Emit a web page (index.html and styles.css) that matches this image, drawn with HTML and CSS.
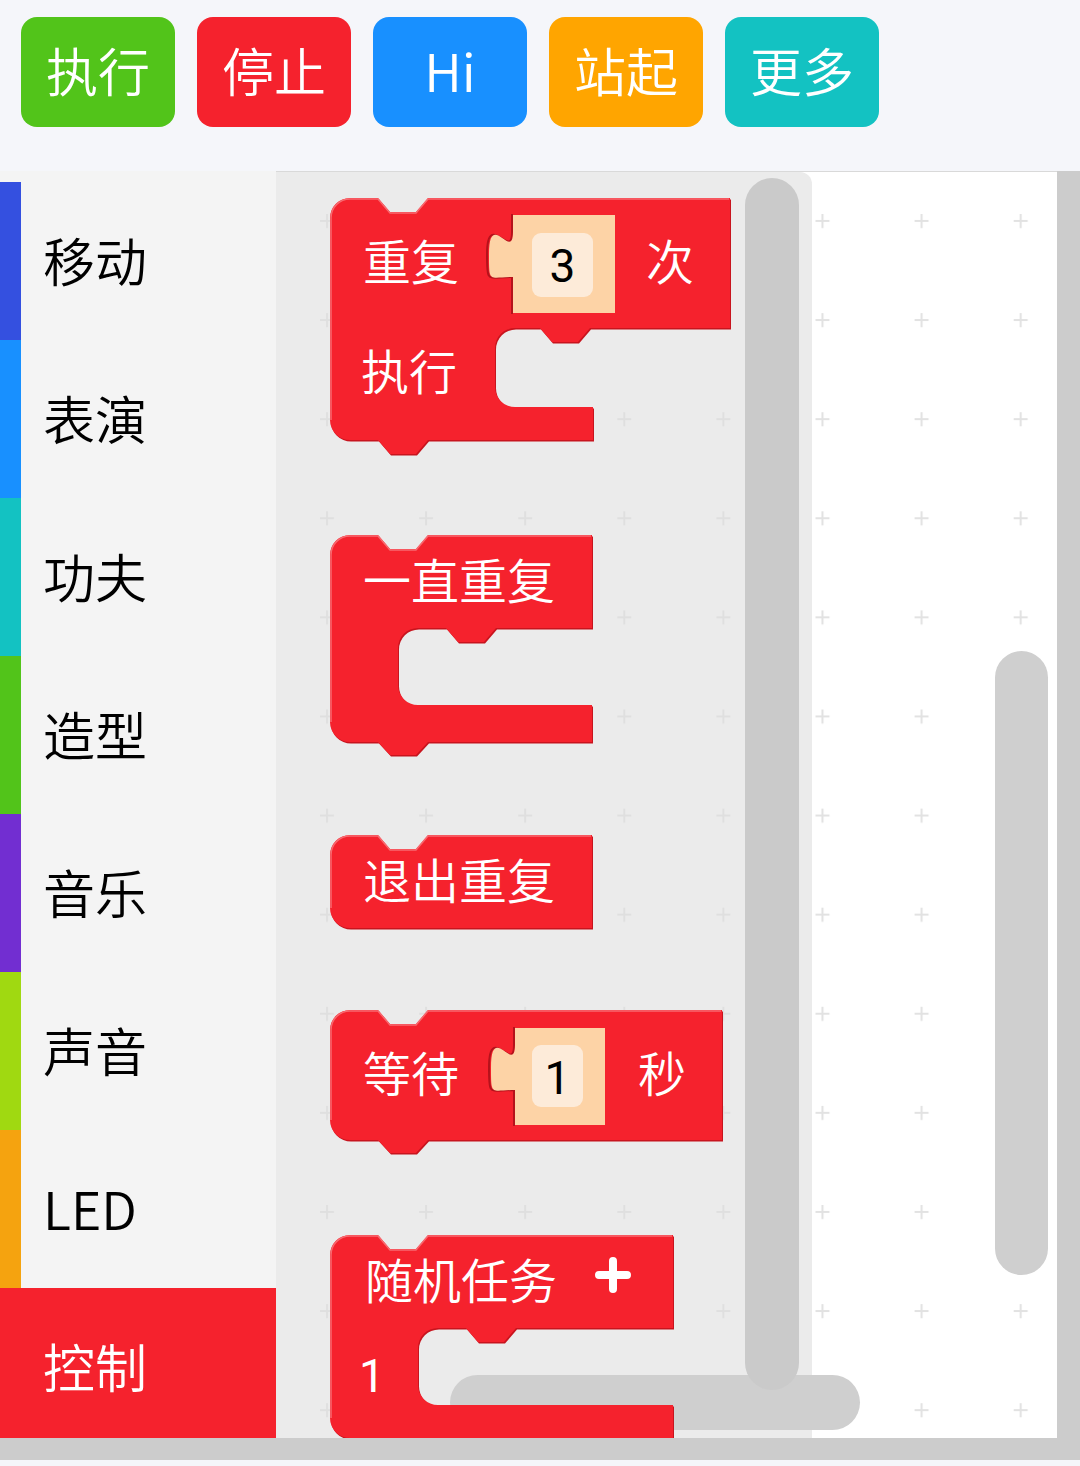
FILE: index.html
```html
<!DOCTYPE html>
<html lang="zh-CN">
<head>
<meta charset="utf-8">
<title>编程</title>
<link rel="stylesheet" href="styles.css">
</head>
<body>
<div class="app">
  <header class="toolbar">
    <button class="tbtn green">执行</button>
    <button class="tbtn red">停止</button>
    <button class="tbtn blue">Hi</button>
    <button class="tbtn orange">站起</button>
    <button class="tbtn teal">更多</button>
  </header>
  <div class="main">
    <nav class="sidebar">
      <div class="cat c-move">移动</div>
      <div class="cat c-show">表演</div>
      <div class="cat c-kungfu">功夫</div>
      <div class="cat c-shape">造型</div>
      <div class="cat c-music">音乐</div>
      <div class="cat c-sound">声音</div>
      <div class="cat c-led">LED</div>
      <div class="cat c-ctrl selected">控制</div>
    </nav>
    <div class="workspace">
      <svg class="canvas" width="781" height="1266" viewBox="276 172 781 1266" xmlns="http://www.w3.org/2000/svg">
        <defs>
          <pattern id="grid" x="320" y="214" width="99.1" height="99.1" patternUnits="userSpaceOnUse">
            <path class="grid-cross" d="M0,7 H14 M7,0 V14"/>
          </pattern>
        </defs>
        <rect class="ws-bg" x="276" y="172" width="781" height="1266"/>
        <rect x="276" y="172" width="781" height="1266" fill="url(#grid)"/>
        <path class="flyout-bg" d="M276,172 L800,172 A12,12 0 0 1 812,184 L812,1438 L276,1438 Z"/>

        <rect class="scroll" x="995" y="651" width="53" height="624" rx="26.5"/>
        <rect class="scroll" x="450" y="1375" width="410" height="55" rx="27.5"/>

        <!-- 重复 3 次 / 执行 -->
        <g class="block">
          <path class="blk-shadow" d="M330,218 A20,20 0 0 1 350,198 L378,198 L390,212 L416,212 L428,198 L730,198 L730,328 L590,328 L578,342 L552,342 L540,328 L515,328 A20,20 0 0 0 495,348 L495,387 A20,20 0 0 0 515,407 L593,407 L593,440 L428,440 L416,454 L390,454 L378,440 L350,440 A20,20 0 0 1 330,420 Z"/>
          <path class="blk" d="M330,218 A20,20 0 0 1 350,198 L378,198 L390,212 L416,212 L428,198 L730,198 L730,328 L590,328 L578,342 L552,342 L540,328 L515,328 A20,20 0 0 0 495,348 L495,387 A20,20 0 0 0 515,407 L593,407 L593,440 L428,440 L416,454 L390,454 L378,440 L350,440 A20,20 0 0 1 330,420 Z"/>
          <path class="blk-light" d="M331,420 L331,218 A19,19 0 0 1 350,199 L378,199 L390,213 L416,213 L428,199 L729,199"/>
          <path class="slot-edge" d="M512,214 L512,232 C512,262 487,208 487,254.5 C487,284 487,277 512,277 L512,314"/>
          <path class="slot" d="M513,215 L615,215 L615,313 L513,313 L513,277 C489,277 489,284 489,254.5 C489,208 513,262 513,232 Z"/>
          <rect class="field" x="532" y="233" width="61" height="64" rx="9"/>
          <text class="blk-text" x="363" y="280">重复</text>
          <text class="num-text" x="562.5" y="282">3</text>
          <text class="blk-text" x="646" y="280">次</text>
          <text class="blk-text" x="361" y="390">执行</text>
        </g>

        <!-- 一直重复 -->
        <g class="block">
          <path class="blk-shadow" d="M330,555 A20,20 0 0 1 350,535 L378,535 L390,549 L416,549 L428,535 L592,535 L592,628 L496,628 L484,642 L458,642 L446,628 L418,628 A20,20 0 0 0 398,648 L398,685 A20,20 0 0 0 418,705 L592,705 L592,742 L428,742 L416,755 L390,755 L378,742 L350,742 A20,20 0 0 1 330,722 Z"/>
          <path class="blk" d="M330,555 A20,20 0 0 1 350,535 L378,535 L390,549 L416,549 L428,535 L592,535 L592,628 L496,628 L484,642 L458,642 L446,628 L418,628 A20,20 0 0 0 398,648 L398,685 A20,20 0 0 0 418,705 L592,705 L592,742 L428,742 L416,755 L390,755 L378,742 L350,742 A20,20 0 0 1 330,722 Z"/>
          <path class="blk-light" d="M331,722 L331,555 A19,19 0 0 1 350,536 L378,536 L390,550 L416,550 L428,536 L591,536"/>
          <text class="blk-text" x="363" y="599">一直重复</text>
        </g>

        <!-- 退出重复 -->
        <g class="block">
          <path class="blk-shadow" d="M330,855 A20,20 0 0 1 350,835 L378,835 L390,849 L416,849 L428,835 L592,835 L592,928 L350,928 A20,20 0 0 1 330,908 Z"/>
          <path class="blk" d="M330,855 A20,20 0 0 1 350,835 L378,835 L390,849 L416,849 L428,835 L592,835 L592,928 L350,928 A20,20 0 0 1 330,908 Z"/>
          <path class="blk-light" d="M331,908 L331,855 A19,19 0 0 1 350,836 L378,836 L390,850 L416,850 L428,836 L591,836"/>
          <text class="blk-text" x="363" y="899">退出重复</text>
        </g>

        <!-- 等待 1 秒 -->
        <g class="block">
          <path class="blk-shadow" d="M330,1030 A20,20 0 0 1 350,1010 L378,1010 L390,1024 L416,1024 L428,1010 L722,1010 L722,1140 L428,1140 L416,1153 L390,1153 L378,1140 L350,1140 A20,20 0 0 1 330,1120 Z"/>
          <path class="blk" d="M330,1030 A20,20 0 0 1 350,1010 L378,1010 L390,1024 L416,1024 L428,1010 L722,1010 L722,1140 L428,1140 L416,1153 L390,1153 L378,1140 L350,1140 A20,20 0 0 1 330,1120 Z"/>
          <path class="blk-light" d="M331,1120 L331,1030 A19,19 0 0 1 350,1011 L378,1011 L390,1025 L416,1025 L428,1011 L721,1011"/>
          <path class="slot-edge" d="M514,1027 L514,1045 C514,1075 489,1021 489,1067.5 C489,1097 489,1090 514,1090 L514,1126"/>
          <path class="slot" d="M515,1028 L605,1028 L605,1125 L515,1125 L515,1090 C491,1090 491,1097 491,1067.5 C491,1021 515,1075 515,1045 Z"/>
          <rect class="field" x="532" y="1045" width="51" height="62" rx="9"/>
          <text class="blk-text" x="363" y="1092">等待</text>
          <text class="num-text" x="557.5" y="1094">1</text>
          <text class="blk-text" x="638" y="1092">秒</text>
        </g>

        <!-- 随机任务 -->
        <g class="block">
          <path class="blk-shadow" d="M330,1255 A20,20 0 0 1 350,1235 L378,1235 L390,1249 L416,1249 L428,1235 L673,1235 L673,1328 L516,1328 L504,1342 L478,1342 L466,1328 L438,1328 A20,20 0 0 0 418,1348 L418,1385 A20,20 0 0 0 438,1405 L673,1405 L673,1438 L428,1438 L416,1452 L390,1452 L378,1438 L350,1438 A20,20 0 0 1 330,1418 Z"/>
          <path class="blk" d="M330,1255 A20,20 0 0 1 350,1235 L378,1235 L390,1249 L416,1249 L428,1235 L673,1235 L673,1328 L516,1328 L504,1342 L478,1342 L466,1328 L438,1328 A20,20 0 0 0 418,1348 L418,1385 A20,20 0 0 0 438,1405 L673,1405 L673,1438 L428,1438 L416,1452 L390,1452 L378,1438 L350,1438 A20,20 0 0 1 330,1418 Z"/>
          <path class="blk-light" d="M331,1418 L331,1255 A19,19 0 0 1 350,1236 L378,1236 L390,1250 L416,1250 L428,1236 L672,1236"/>
          <text class="blk-text" x="365" y="1299">随机任务</text>
          <path class="plus" d="M599,1275 H627 M613,1261 V1289"/>
          <text class="num-text light" x="372" y="1392">1</text>
        </g>

        <rect class="scroll flyout-scroll" x="745" y="178" width="54" height="1212" rx="27"/>
      </svg>
    </div>
  </div>
</div>
</body>
</html>
```
FILE: styles.css
```css
* { box-sizing: border-box; }

html, body {
  margin: 0;
  padding: 0;
  background: #f5f6fa;
  font-family: "Noto Sans CJK SC", "Noto Sans", sans-serif;
}

.app {
  width: 1080px;
  height: 1466px;
  display: flex;
  flex-direction: column;
  overflow: hidden;
}

.toolbar {
  height: 171px;
  flex: none;
  display: flex;
  gap: 22px;
  padding: 17px 21px 0;
  align-items: flex-start;
  background: #f5f6fa;
}

.tbtn {
  width: 154px;
  height: 110px;
  border: none;
  border-radius: 16px;
  color: #fff;
  font-family: "Noto Sans CJK SC", "Noto Sans", sans-serif;
  font-size: 52px;
  font-weight: 350;
  line-height: 1;
  padding: 0 0 4px;
  display: flex;
  align-items: center;
  justify-content: center;
}
.tbtn.green { background: #52c41a; }
.tbtn.red { background: #f5222d; }
.tbtn.blue { background: #1890ff; }
.tbtn.orange { background: #ffa500; }
.tbtn.teal { background: #13c2c2; }

.main {
  flex: none;
  height: 1289px;
  display: flex;
  background: #cccccc;
  padding: 0 23px 22px 0;
}

.sidebar {
  width: 276px;
  flex: none;
  background: #f4f4f4;
  padding-top: 11px;
  overflow: hidden;
}

.cat {
  height: 158px;
  display: flex;
  align-items: center;
  border-left: 21px solid transparent;
  padding-left: 22px;
  font-size: 52px;
  font-weight: 350;
  color: #000;
  line-height: 1;
  padding-bottom: 2px;
}
.c-move { border-left-color: #3450e0; }
.c-show { border-left-color: #1890ff; }
.c-kungfu { border-left-color: #13c2c2; }
.c-shape { border-left-color: #52c41a; }
.c-music { border-left-color: #722ed1; }
.c-sound { border-left-color: #a0d911; }
.c-led { border-left-color: #f5a30f; }
.c-ctrl { border-left-color: #f5222d; }
.cat.selected {
  background: #f5222d;
  color: #fff;
}

.workspace {
  flex: 1;
  border-top: 1px solid #d9d9d9;
  overflow: hidden;
  background: #fff;
}

.canvas { display: block; }

.ws-bg { fill: #ffffff; }
.grid-cross { stroke: #e2e2e2; stroke-width: 2; fill: none; }
.flyout-bg { fill: #dedede; fill-opacity: 0.6; }

.scroll { fill: #cfcfcf; }
.flyout-scroll { fill: #cacaca; }

.blk { fill: #f5222d; }
.blk-shadow { fill: #c8141e; transform: translate(1px, 1.5px); }
.blk-light { fill: none; stroke: #f86a70; stroke-width: 1.5; }
.slot-edge { fill: none; stroke: #b5121b; stroke-width: 2; }
.slot { fill: #fdd3a6; }
.field { fill: #fdebd9; }

.blk-text {
  fill: #fff;
  font-family: "Noto Sans CJK SC", "Noto Sans", sans-serif;
  font-size: 48px;
  font-weight: 350;
}
.num-text {
  fill: #000;
  font-family: Roboto, "Noto Sans CJK SC", sans-serif;
  font-size: 46px;
  font-weight: 400;
  text-anchor: middle;
}
.num-text.light { fill: #fff; }
.plus {
  stroke: #fff;
  stroke-width: 8;
  stroke-linecap: round;
  fill: none;
}
```
